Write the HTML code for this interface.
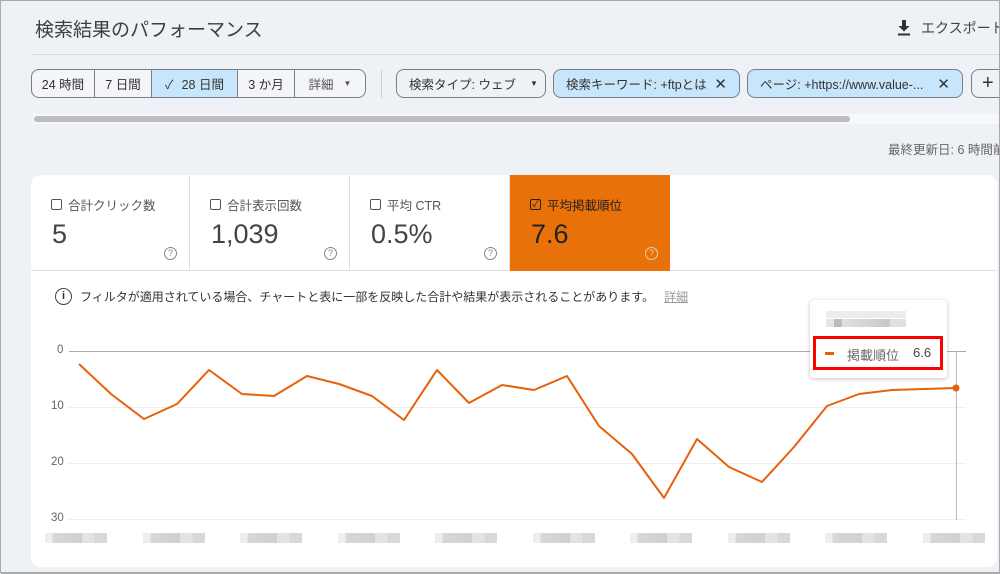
<!DOCTYPE html>
<html><head><meta charset="utf-8"><style>
*{box-sizing:border-box;margin:0;padding:0}
body{width:1000px;height:573px;overflow:hidden;background:#eef2f7;font-family:"Liberation Sans","Noto Sans CJK JP",sans-serif;color:#3c4043;position:relative;border-left:1px solid #aaa;border-top:1px solid #aaa}
.abs{position:absolute}
.title{left:34px;top:14px;font-size:19px;color:#3c4043}
.exp{left:896px;top:17px;font-size:14px;color:#444;white-space:nowrap}
.hr{left:30px;top:53px;width:970px;height:1px;background:#d5d8dc}
.seg{left:30px;top:68px;height:29px;border:1px solid #7a7f85;border-radius:8px;display:flex;overflow:hidden;font-size:12.5px;background:#f3f5f8}
.seg div{display:flex;align-items:center;justify-content:center;border-right:1px solid #7a7f85;color:#333}
.seg div:last-child{border-right:none}
.chip{top:68px;height:29px;border:1px solid #7a7f85;border-radius:8px;display:flex;align-items:center;font-size:12.5px;padding:0 12px;color:#333;white-space:nowrap}
.blue{background:#c8e6fb}
.vsep{left:380px;top:69px;width:1px;height:28px;background:#ccc}
.scroll{left:32px;top:113px;width:968px;height:10px;background:#f7f8f9}
.thumb{left:33px;top:115px;width:816px;height:6px;border-radius:3px;background:#bdbdbd}
.upd{left:887px;top:138px;font-size:12.5px;color:#666;white-space:nowrap}
.card{left:30px;top:174px;width:966px;height:392px;background:#fff;border-radius:10px;overflow:hidden}
.tile{position:absolute;top:0;height:96px;border-right:1px solid #e0e0e0;border-bottom:1px solid #e0e0e0}
.lab{position:absolute;left:20px;top:20px;font-size:12.5px;color:#555;display:flex;align-items:center;gap:6px}
.cb{width:11px;height:11px;border:1.5px solid #555;border-radius:2px}
.val{position:absolute;left:21px;top:44px;font-size:27px;color:#444}
.q{position:absolute;right:12px;top:72px;width:13px;height:13px;border:1px solid #888;border-radius:50%;font-size:9px;color:#888;text-align:center;line-height:11px}
.info{left:54px;top:287px;font-size:12px;color:#333;display:flex;align-items:center;gap:8px;white-space:nowrap}
.ic{width:17px;height:17px;border:1.5px solid #444;border-radius:50%;font-size:11px;text-align:center;line-height:14px;font-weight:bold}
.ax{font-size:11.5px;color:#666}
.blur{height:10px;top:532px;background:linear-gradient(90deg,#eee 0,#eee 12%,#d8d8d8 12%,#d0d0d0 60%,#e3e3e3 60%,#e3e3e3 80%,#d8d8d8 80%)}
.tip{left:809px;top:299px;width:137px;height:78px;background:#fff;border-radius:4px;box-shadow:0 1px 4px rgba(0,0,0,.25)}
</style></head><body>
<div class="abs title">検索結果のパフォーマンス</div>
<div class="abs exp"><svg width="14" height="16" viewBox="0 0 14 16" style="vertical-align:-3px;margin-right:10px"><path d="M5 0h4v6h3.5L7 11.5 1.5 6H5z" fill="#333"/><rect x="1" y="13.5" width="12" height="2" fill="#333"/></svg>エクスポート</div>
<div class="abs hr"></div>
<div class="abs seg">
<div style="width:63px">24 時間</div>
<div style="width:57px">7 日間</div>
<div style="width:86px;background:#c8e6fb"><span style="margin-right:8px">✓</span>28 日間</div>
<div style="width:57px">3 か月</div>
<div style="width:70px;color:#555">詳細 <span style="font-size:8px;margin-left:10px">▼</span></div>
</div>
<div class="abs vsep"></div>
<div class="abs chip" style="left:395px;width:150px">検索タイプ: ウェブ<span style="font-size:8px;margin-left:14px">▼</span></div>
<div class="abs chip blue" style="left:552px;width:187px">検索キーワード: +ftpとは<span style="margin-left:auto;font-size:15px">✕</span></div>
<div class="abs chip blue" style="left:746px;width:216px">ページ: +https://www.value-...<span style="margin-left:auto;font-size:15px">✕</span></div>
<div class="abs chip" style="left:970px;width:40px;font-size:20px;padding:0 0 0 10px">+</div>
<div class="abs scroll"></div><div class="abs thumb"></div>
<div class="abs upd">最終更新日: 6 時間前</div>
<div class="abs card">
<div class="tile" style="left:0;width:159px"><div class="lab"><div class="cb"></div>合計クリック数</div><div class="val">5</div><div class="q">?</div></div>
<div class="tile" style="left:159px;width:160px"><div class="lab"><div class="cb"></div>合計表示回数</div><div class="val">1,039</div><div class="q">?</div></div>
<div class="tile" style="left:319px;width:160px"><div class="lab"><div class="cb"></div>平均 CTR</div><div class="val">0.5%</div><div class="q">?</div></div>
<div class="tile" style="left:479px;width:160px;background:#e8710a;border:none"><div class="lab" style="color:#222"><div class="cb" style="border-color:#222;font-size:9px;line-height:8px;text-align:center">✓</div>平均掲載順位</div><div class="val" style="color:#222">7.6</div><div class="q" style="border-color:#f5c9a0;color:#f5c9a0">?</div></div>
<div class="tile" style="left:639px;width:327px;border-right:none"></div>
</div>
<div class="abs info"><div class="ic">i</div>フィルタが適用されている場合、チャートと表に一部を反映した合計や結果が表示されることがあります。<span style="color:#999;text-decoration:underline;margin-left:2px">詳細</span></div>
<svg class="abs" style="left:0;top:0" width="1000" height="573">
<line x1="68" y1="350.5" x2="965" y2="350.5" stroke="#aaa" stroke-width="1"/>
<line x1="68" y1="406.5" x2="965" y2="406.5" stroke="#eee"/>
<line x1="68" y1="462.5" x2="965" y2="462.5" stroke="#eee"/>
<line x1="68" y1="518.5" x2="965" y2="518.5" stroke="#eee"/>
<line x1="955.5" y1="350" x2="955.5" y2="519" stroke="#bbb"/>
<polyline fill="none" stroke="#e8600a" stroke-width="2" stroke-linejoin="round" points="78,363 110,393 143,418 176,403 208,369 241,393 273,395 306,375 338,383 371,395 403,419 436,369 468,402 501,384 533,389 566,375 598,425 631,453 663,497 696,438 728,466 761,481 793,446 826,405 858,393 891,389 923,388 955,387"/>
<circle cx="955" cy="387" r="3.5" fill="#e8600a"/>
</svg>
<div class="abs ax" style="left:56px;top:343px">0</div>
<div class="abs ax" style="left:50px;top:399px">10</div>
<div class="abs ax" style="left:50px;top:455px">20</div>
<div class="abs ax" style="left:50px;top:511px">30</div>
<div class="abs blur" style="left:44px;width:62px"></div>
<div class="abs blur" style="left:142px;width:62px"></div>
<div class="abs blur" style="left:239px;width:62px"></div>
<div class="abs blur" style="left:337px;width:62px"></div>
<div class="abs blur" style="left:434px;width:62px"></div>
<div class="abs blur" style="left:532px;width:62px"></div>
<div class="abs blur" style="left:629px;width:62px"></div>
<div class="abs blur" style="left:727px;width:62px"></div>
<div class="abs blur" style="left:824px;width:62px"></div>
<div class="abs blur" style="left:922px;width:62px"></div>
<div class="abs tip">
<div class="abs" style="left:16px;top:11px;width:80px;height:7px;background:#ececec"></div>
<div class="abs" style="left:16px;top:19px;width:80px;height:8px;background:linear-gradient(90deg,#e5e5e5 0,#e5e5e5 10%,#bbb 10%,#bbb 20%,#e0e0e0 20%,#d0d0d0 60%,#c8c8c8 80%,#e0e0e0 80%)"></div>
<div class="abs" style="left:3px;top:36px;width:130px;height:34px;border:3px solid #f00"></div>
<div class="abs" style="left:15px;top:52px;width:9px;height:3px;background:#e8600a"></div>
<div class="abs" style="left:37px;top:45px;font-size:13px;color:#666">掲載順位</div>
<div class="abs" style="left:103px;top:45px;font-size:13px;color:#444">6.6</div>
</div>
<div class="abs" style="left:998px;top:0;width:2px;height:573px;background:#aaa"></div>
<div class="abs" style="left:0;top:571px;width:1000px;height:2px;background:#aaa"></div>
</body></html>
